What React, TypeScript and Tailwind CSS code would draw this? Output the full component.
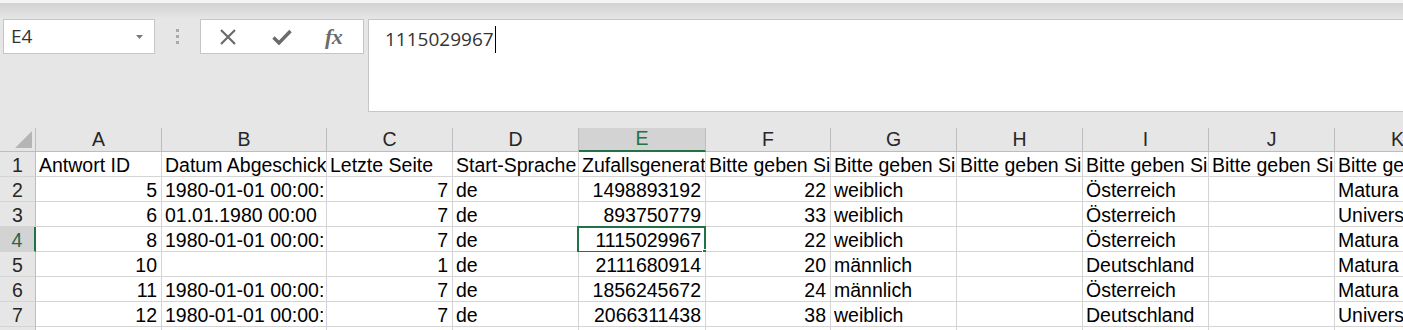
const COLS = ["A", "B", "C", "D", "E", "F", "G", "H", "I", "J", "K"];

type Cell = { v: string; num?: boolean };

const n = (v: string): Cell => ({ v, num: true });
const t = (v: string): Cell => ({ v });
const e: Cell = { v: "" };

// header texts are clipped by the next filled cell, keep only what shows
const ASK = "Bitte geben Si";
const DT = "1980-01-01 00:00:";

const ROWS: Cell[][] = [
  [t("Antwort ID"), t("Datum Abgeschick"), t("Letzte Seite"), t("Start-Sprache"), t("Zufallsgenerat"), t(ASK), t(ASK), t(ASK), t(ASK), t(ASK), t("Bitte geben Sie")],
  [n("5"), t(DT), n("7"), t("de"), n("1498893192"), n("22"), t("weiblich"), e, t("Österreich"), e, t("Matura")],
  [n("6"), t("01.01.1980 00:00"), n("7"), t("de"), n("893750779"), n("33"), t("weiblich"), e, t("Österreich"), e, t("Universität")],
  [n("8"), t(DT), n("7"), t("de"), n("1115029967"), n("22"), t("weiblich"), e, t("Österreich"), e, t("Matura")],
  [n("10"), e, n("1"), t("de"), n("2111680914"), n("20"), t("männlich"), e, t("Deutschland"), e, t("Matura")],
  [n("11"), t(DT), n("7"), t("de"), n("1856245672"), n("24"), t("männlich"), e, t("Österreich"), e, t("Matura")],
  [n("12"), t(DT), n("7"), t("de"), n("2066311438"), n("38"), t("weiblich"), e, t("Deutschland"), e, t("Universität")],
  [n("13"), t(DT), n("7"), t("de"), n("1290448811"), n("27"), t("weiblich"), e, t("Österreich"), e, t("Matura")],
];

const SEL_COL = 4; // E
const SEL_ROW = 4;

function FormulaBar() {
  return (
    <div className="flex items-start h-[109px]">
      {/* name box */}
      <div className="ml-[3px] w-[152px] h-[35px] bg-white border border-[#c6c6c6] flex items-center justify-between pl-[7px] pr-[11px] font-['Open_Sans',sans-serif] text-[19px] text-[#333]">
        <span className="leading-none">E4</span>
        <svg width="7" height="4" viewBox="0 0 7 4"><path d="M0 0h7L3.5 4z" fill="#7a7a7a" /></svg>
      </div>
      <div className="w-[45px] h-[35px] flex flex-col items-center justify-center gap-[3px]">
        <div className="w-[3px] h-[3px] bg-[#a9a9a9]" />
        <div className="w-[3px] h-[3px] bg-[#a9a9a9]" />
        <div className="w-[3px] h-[3px] bg-[#a9a9a9]" />
      </div>
      {/* cancel / enter / fx */}
      <div className="w-[164px] h-[35px] bg-white border border-[#c6c6c6] flex items-center pl-[18px] gap-[35px]">
        <svg width="18" height="16" viewBox="0 0 18 16">
          <path d="M2 1l14 14M16 1L2 15" stroke="#6b6b6b" strokeWidth="2.2" fill="none" />
        </svg>
        <svg width="20" height="16" viewBox="0 0 20 16">
          <path d="M1.5 8.5l5.5 5.5L18.5 2" stroke="#6b6b6b" strokeWidth="3.4" fill="none" />
        </svg>
        <span className="ml-[-2px] font-['Liberation_Serif',serif] italic font-bold text-[22px] leading-none text-[#6b6b6b] tracking-[-0.5px]">fx</span>
      </div>
      {/* formula input */}
      <div className="ml-[4px] flex-1 h-[93px] bg-white border border-r-0 border-[#c6c6c6] pl-[16px] pt-[6px] flex items-start font-['Open_Sans',sans-serif] text-[19px] text-[#333]">
        <span className="leading-[26px]">1115029967</span>
        <span className="ml-[1px] w-[1px] h-[27px] bg-black" />
      </div>
    </div>
  );
}

function Sheet() {
  return (
    <div className="grid grid-cols-[36px_126px_165px_126px_126px_127px_125px_126px_126px_126px_126px_126px] w-max font-['Liberation_Sans',Arial,sans-serif] text-[19.5px] text-black">
      {/* corner */}
      <div className="h-[24px] bg-[#e6e6e6] border-r border-b border-[#bdbdbd] flex items-end justify-end pr-[3px] pb-[3px]">
        <svg width="17" height="17" viewBox="0 0 17 17"><path d="M17 0v17H0z" fill="#b5b5b5" /></svg>
      </div>
      {COLS.map((c, i) => (
        <div
          key={c}
          className={
            i === SEL_COL
              ? "h-[24px] bg-[#d3d3d3] border-r border-[#bdbdbd] border-b-2 border-b-[#217346] flex items-center justify-center text-[#217346] leading-none"
              : "h-[24px] bg-[#e6e6e6] border-r border-b border-[#bdbdbd] flex items-center justify-center text-[#262626] leading-none"
          }
        >
          {c}
        </div>
      ))}

      {ROWS.map((row, r) => {
        const rn = r + 1;
        return [
          <div
            key={`h${rn}`}
            className={
              rn === SEL_ROW
                ? "h-[25px] bg-[#d3d3d3] border-b border-[#d4d4d4] border-r-2 border-r-[#217346] flex items-end justify-center leading-[21px] text-[#2f5f45]"
                : "h-[25px] bg-[#e6e6e6] border-r border-b border-[#bdbdbd] border-b-[#d4d4d4] flex items-end justify-center leading-[21px] text-[#262626]"
            }
          >
            {rn}
          </div>,
          ...row.map((cell, c) => {
            const sel = rn === SEL_ROW && c === SEL_COL;
            return (
              <div
                key={`${rn}-${c}`}
                className={`relative h-[25px] bg-white border-r border-b border-[#d4d4d4] flex items-end whitespace-nowrap leading-[21px] ${
                  cell.num ? "justify-end pr-[4px]" : "justify-start pl-[3px]"
                }`}
              >
                <div className="min-w-0 overflow-hidden">{cell.v}</div>
                {sel && (
                  <div className="absolute left-[-2px] top-[-1px] w-[129px] h-[27px] border-2 border-[#217346]">
                    <div className="absolute right-[-4px] bottom-[-4px] w-[6px] h-[6px] bg-[#217346] border border-white" />
                  </div>
                )}
              </div>
            );
          }),
        ];
      })}
    </div>
  );
}

export default function App() {
  return (
    <div className="w-[1403px] h-[330px] overflow-hidden bg-[#e6e6e6]">
      <div className="h-[3px] bg-[#f4f4f4]" />
      <div className="h-[16px] bg-gradient-to-b from-[#d2d2d2] to-[#e6e6e6]" />
      <FormulaBar />
      <Sheet />
    </div>
  );
}
